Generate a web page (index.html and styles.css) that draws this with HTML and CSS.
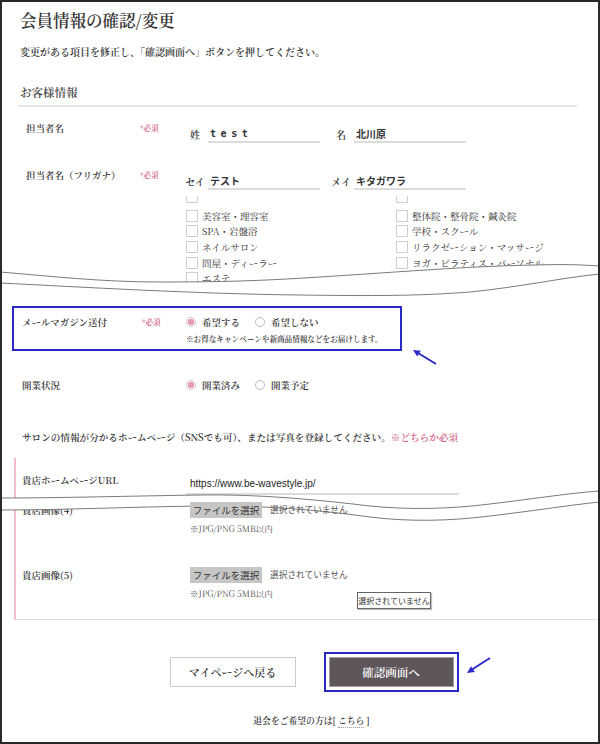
FILE: index.html
```html
<!DOCTYPE html>
<html lang="ja">
<head>
  <meta charset="UTF-8">
  <title>会員情報の確認/変更</title>
  <meta name="viewport" content="width=device-width, initial-scale=1.0">
  <link rel="stylesheet" href="styles.css">
</head>
<body>

<div class="page">
  <h1 class="title">会員情報の確認/変更</h1>
  <p class="lead">変更がある項目を修正し、「確認画面へ」ボタンを押してください。</p>

  <h2 class="sec-title">お客様情報</h2>

  <div class="row row-name">
    <div class="label">担当者名</div>
    <div class="req">*必須</div>
    <div class="names">
      <span class="pre">姓</span><input class="line-input spaced" value="test">
      <span class="pre pre-2">名</span><input class="line-input" value="北川原">
    </div>
  </div>

  <div class="row row-kana">
    <div class="label">担当者名（フリガナ）</div>
    <div class="req">*必須</div>
    <div class="names">
      <span class="pre">セイ</span><input class="line-input" value="テスト">
      <span class="pre pre-2">メイ</span><input class="line-input" value="キタガワラ">
    </div>
  </div>

  <div class="types-clip">
    <div class="types-cut"><span class="cut-box"></span><span class="cut-box"></span></div>
    <div class="types">
      <label class="type"><input type="checkbox" class="check">美容室・理容室</label>
      <label class="type"><input type="checkbox" class="check">整体院・整骨院・鍼灸院</label>
      <label class="type"><input type="checkbox" class="check">SPA・岩盤浴</label>
      <label class="type"><input type="checkbox" class="check">学校・スクール</label>
      <label class="type"><input type="checkbox" class="check">ネイルサロン</label>
      <label class="type"><input type="checkbox" class="check">リラクゼーション・マッサージ</label>
      <label class="type"><input type="checkbox" class="check">問屋・ディーラー</label>
      <label class="type"><input type="checkbox" class="check">ヨガ・ピラティス・パーソナル</label>
      <label class="type"><input type="checkbox" class="check">エステ</label>
      <label class="type"><input type="checkbox" class="check">その他</label>
    </div>
  </div>

  <div class="tear tear-1">
    <svg width="596" height="50" viewBox="2 250 596 50">
      <path class="tear-fill" d="M0,272 C50,276 100,282 160,282 C220,282 260,281 320,277 C400,272 470,266 536,265 C565,264 585,265 600,266 L600,274 C560,278 520,287 470,292 C420,296 370,296 300,295 C200,294 80,287 0,283 Z"/>
      <path class="tear-line" d="M0,272 C50,276 100,282 160,282 C220,282 260,281 320,277 C400,272 470,266 536,265 C565,264 585,265 600,266"/>
      <path class="tear-line" d="M0,283 C80,287 200,294 300,295 C370,296 420,296 470,292 C520,287 560,278 600,274"/>
    </svg>
  </div>

  <div class="mail">
    <div class="label">メールマガジン送付</div>
    <div class="req">*必須</div>
    <div class="radios">
      <label class="radio-item"><input type="radio" name="mail" class="radio" checked>希望する</label>
      <label class="radio-item"><input type="radio" name="mail" class="radio">希望しない</label>
    </div>
    <div class="mail-note">※お得なキャンペーンや新商品情報などをお届けします。</div>
  </div>

  <div class="status-row">
    <div class="label">開業状況</div>
    <div class="req"></div>
    <div class="radios">
      <label class="radio-item"><input type="radio" name="status" class="radio" checked>開業済み</label>
      <label class="radio-item"><input type="radio" name="status" class="radio">開業予定</label>
    </div>
  </div>

  <p class="salon-lead">サロンの情報が分かるホームページ（SNSでも可）、または写真を登録してください。<span class="pink">※どちらか必須</span></p>

  <div class="salon-box">
    <div class="url-row">
      <div class="label">貴店ホームページURL</div>
      <input class="url-input" value="https://www.be-wavestyle.jp/">
    </div>

    <div class="tear tear-2">
      <svg width="596" height="50" viewBox="2 480 596 50">
        <path class="tear-fill" d="M0,498 C60,498 130,496 200,495 C260,494 320,500 370,506 C410,510 450,509 490,504 C540,498 570,493 600,491 L600,502 C570,505 540,510 490,516 C450,521 410,522 370,517 C320,510 260,505 200,506 C130,507 60,510 0,510 Z"/>
        <path class="tear-line" d="M0,498 C60,498 130,496 200,495 C260,494 320,500 370,506 C410,510 450,509 490,504 C540,498 570,493 600,491"/>
        <path class="tear-line" d="M0,510 C60,510 130,507 200,506 C260,505 320,510 370,517 C410,522 450,521 490,516 C540,510 570,505 600,502"/>
      </svg>
    </div>

    <div class="file-row file-row-cut">
      <div class="label">貴店画像(4)</div>
      <div class="file-field">
        <div class="file-line"><span class="file-btn">ファイルを選択</span><span class="file-status">選択されていません</span></div>
        <div class="file-note">※JPG/PNG 5MB以内</div>
      </div>
    </div>

    <div class="file-row file-row-last">
      <div class="label">貴店画像(5)</div>
      <div class="file-field">
        <div class="file-line"><span class="file-btn">ファイルを選択</span><span class="file-status">選択されていません</span></div>
        <div class="file-note">※JPG/PNG 5MB以内</div>
        <div class="tooltip">選択されていません</div>
      </div>
    </div>
  </div>

  <div class="actions">
    <button class="btn btn-back">マイページへ戻る</button>
    <button class="btn btn-next">確認画面へ</button>
  </div>

  <p class="leave">退会をご希望の方は[ <a class="leave-link">こちら</a> ]</p>

  <svg class="marks" width="596" height="740" viewBox="2 2 596 740">
    <line x1="436" y1="364" x2="418" y2="353" class="mark-line"/>
    <polygon points="413,350 420.8,350.7 417.2,356.6" class="mark-head"/>
    <line x1="490" y1="658" x2="472" y2="669.5" class="mark-line"/>
    <polygon points="467,673 474.8,672.1 471,666.3" class="mark-head"/>
  </svg>
</div>

</body>
</html>
```

FILE: styles.css
```css
* {
  box-sizing: border-box;
}
body {
  margin: 0;
  background: #fff;
}
.page {
  position: relative;
  width: 600px;
  height: 744px;
  border: 2px solid #2a2a2a;
  padding: 0 21px 0 18px;
  overflow: hidden;
  background: #fff;
  color: #333;
  font-family: "Noto Serif CJK JP", "Noto Sans CJK JP", serif;
}
.title {
  margin: 0;
  padding-top: 8px;
  font-size: 16.5px;
  line-height: 20px;
  font-weight: 600;
}
.lead {
  margin: 15px 0 0;
  font-size: 10px;
  line-height: 14px;
  font-weight: 600;
}
.sec-title {
  margin: 25px 0 0 -2px;
  padding: 0 0 5px 2px;
  font-size: 11.5px;
  line-height: 16px;
  font-weight: 600;
  color: #444;
  border-bottom: 2px solid #e6e6e6;
}

/* customer rows */
.row {
  display: grid;
  grid-template-columns: 114px 42px 1fr;
  padding-left: 6px;
}
.row-name {
  padding-top: 14px;
}
.row-kana {
  padding-top: 25px;
}
.label {
  font-size: 9.5px;
  line-height: 14px;
  font-weight: 600;
  color: #333;
}
.req {
  font-size: 7.5px;
  line-height: 13px;
  color: #d2587f;
  font-weight: 600;
}
.names {
  display: flex;
  align-items: center;
  margin-top: 4px;
}
.pre {
  width: 26px;
  text-align: center;
  font-size: 10px;
  font-weight: 600;
}
.pre-2 {
  margin-left: 8px;
}
.line-input {
  width: 112px;
  height: 18px;
  padding: 0 2px;
  border: 0;
  border-bottom: 2px solid #dcdcdc;
  background: transparent;
  font: bold 10px "Noto Sans CJK JP", sans-serif;
  color: #333;
  outline: none;
}
.spaced {
  letter-spacing: 4.6px;
  font-family: "DejaVu Sans Mono", monospace;
}

/* business types */
.types-clip {
  margin-top: 6px;
  height: 96px;
  overflow: hidden;
  padding-left: 166px;
}
.types-cut {
  display: grid;
  grid-template-columns: 210px 1fr;
}
.cut-box {
  display: block;
  width: 12px;
  height: 7px;
  border: 1px solid #cfcfcf;
  border-top: 0;
}
.types {
  display: grid;
  grid-template-columns: 210px 1fr;
  grid-auto-rows: 15.6px;
  margin-top: 5px;
}
.type {
  display: flex;
  align-items: center;
  font-size: 9.5px;
  color: #333;
}
.check {
  appearance: none;
  width: 12px;
  height: 12px;
  margin: 0 4px 0 0;
  border: 1px solid #cfcfcf;
  background: #fff;
}

/* torn-page marks */
.tear {
  position: relative;
  height: 0;
}
.tear svg {
  position: absolute;
  left: -18px;
  display: block;
}
.tear-1 svg {
  top: -42px;
}
.tear-2 svg {
  left: -20px;
  top: -15px;
}
.tear-fill {
  fill: #fff;
}
.tear-line {
  fill: none;
  stroke: #7a7a7a;
  stroke-width: 1;
}

/* mail magazine */
.mail {
  display: grid;
  grid-template-columns: 120px 44px 1fr;
  width: 390px;
  margin: 14px 0 0 -8px;
  padding: 7px 0 5px 8px;
  border: 2px solid #2a2ac6;
}
.radios {
  display: flex;
  gap: 15px;
}
.radio-item {
  display: flex;
  align-items: center;
  gap: 6px;
  font-size: 9.5px;
  line-height: 14px;
  font-weight: 600;
  color: #333;
}
.radio {
  appearance: none;
  width: 10px;
  height: 10px;
  margin: 0;
  border: 1px solid #bdbdbd;
  border-radius: 50%;
  background: #fff;
}
.radio:checked {
  background: radial-gradient(circle, #e89aae 0 3px, #fff 3.5px);
  border-color: #d9c4c9;
}
.mail-note {
  grid-column: 3;
  margin-top: 4px;
  font-size: 7.6px;
  line-height: 11px;
  font-weight: 600;
}
.status-row {
  display: grid;
  grid-template-columns: 120px 44px 1fr;
  margin-top: 27px;
  padding-left: 2px;
}

/* salon info */
.salon-lead {
  margin: 38px 0 0;
  padding-left: 2px;
  font-size: 9.6px;
  line-height: 14px;
  font-weight: 600;
  color: #333;
}
.pink {
  color: #d2587f;
}
.salon-box {
  margin: 14px -21px 0 -6px;
  padding: 15px 0 17.5px 6px;
  border-left: 2px solid #f3bccb;
  border-bottom: 1px solid #dedede;
}
.url-row,
.file-row {
  display: grid;
  grid-template-columns: 164px 1fr;
}
.url-input {
  width: 273px;
  height: 21px;
  margin-top: 1px;
  padding: 0 4px;
  border: 0;
  border-bottom: 2px solid #dcdcdc;
  font: 10px "Liberation Sans", Arial, sans-serif;
  color: #222;
  outline: none;
}
.file-row .label {
  line-height: 16px;
}
.file-row-cut {
  margin-top: 6.5px;
}
.file-row-last {
  margin-top: 31.5px;
}
.file-field {
  position: relative;
  padding-left: 4px;
}
.file-line {
  display: flex;
  align-items: center;
  gap: 8px;
  height: 16px;
}
.file-btn {
  width: 72px;
  height: 16px;
  background: #c6c6c6;
  font: 9.5px/16px "Noto Sans CJK JP", sans-serif;
  text-align: center;
  color: #333;
}
.file-status {
  font: 8.7px/16px "Noto Sans CJK JP", sans-serif;
  color: #555;
}
.file-note {
  margin-top: 2px;
  font-size: 8.5px;
  line-height: 16px;
  color: #555;
}
.tooltip {
  position: absolute;
  left: 171px;
  top: 25px;
  width: 74px;
  height: 17px;
  border: 1px solid #666;
  background: #fff;
  box-shadow: 1px 1px 1px rgba(0,0,0,0.25);
  font: 8px/15px "Noto Sans CJK JP", sans-serif;
  text-align: center;
  color: #333;
}

/* buttons */
.actions {
  display: flex;
  justify-content: center;
  gap: 33px;
  margin-top: 37px;
  padding-left: 26px;
}
.btn {
  height: 30px;
  padding: 0;
  font-family: "Noto Serif CJK JP", "Noto Sans CJK JP", serif;
  font-weight: 600;
  cursor: pointer;
}
.btn-back {
  width: 126px;
  border: 1px solid #cccccc;
  background: #fff;
  color: #333;
  font-size: 11px;
}
.btn-next {
  width: 125px;
  border: 1px solid #a29ca0;
  background: #5e565b;
  color: #fff;
  font-size: 11.5px;
  outline: 2px solid #2a2ac6;
  outline-offset: 3px;
}
.leave {
  margin: 28px 0 0;
  padding-left: 26px;
  text-align: center;
  font-size: 8.8px;
  line-height: 12px;
  font-weight: 600;
  color: #333;
}
.leave-link {
  border-bottom: 1px dotted #999;
}

/* annotation arrows */
.marks {
  position: absolute;
  left: 0;
  top: 0;
  pointer-events: none;
}
.mark-line {
  stroke: #2a2ac6;
  stroke-width: 2;
}
.mark-head {
  fill: #2a2ac6;
}
```
